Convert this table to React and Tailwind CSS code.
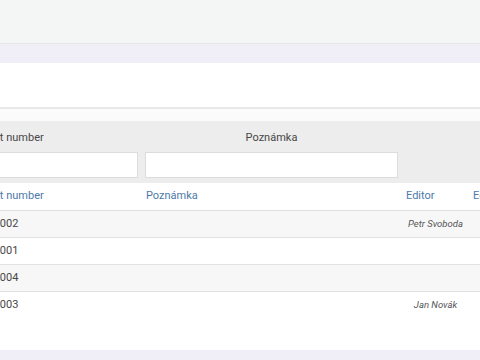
import React from "react";

const rows = [
  { number: "2024-002", note: "", editor: "Petr Svoboda" },
  { number: "2024-001", note: "", editor: "" },
  { number: "2024-004", note: "", editor: "" },
  { number: "2024-003", note: "", editor: "Jan Novák" },
];

const cols = "grid grid-cols-[197px_259px_69px_120px]";

export default function App() {
  return (
    <div
      className="w-[480px] h-[360px] overflow-hidden bg-white text-[11px] text-[#474747] flex flex-col"
      style={{ fontFamily: "Roboto, 'Liberation Sans', sans-serif" }}
    >
      {/* top toolbar */}
      <div className="h-[44px] shrink-0 bg-[#f4f6f5] border-b border-[#e6e8e8]" />
      <div className="h-[19px] shrink-0 bg-[#f0eff8]" />

      {/* page header area */}
      <div className="h-[46px] shrink-0 bg-white border-b-2 border-[#e8e8e8]" />
      <div className="h-[12px] shrink-0 bg-[#fbfbfb]" />

      <div className="-ml-[55px] shrink-0">
        {/* filter row */}
        <div className={`${cols} bg-[#ededed] h-[62px] pt-[10px]`}>
          <div className="pl-[8px] pr-[4px]">
            <div className="h-[14px] leading-[14px] whitespace-nowrap">Document number</div>
            <input className="mt-[7px] w-full h-[26px] bg-white border border-[#dcdcdc] outline-none" />
          </div>
          <div className="px-[3px]">
            <div className="h-[14px] leading-[14px] text-center">Poznámka</div>
            <input className="mt-[7px] w-full h-[26px] bg-white border border-[#dcdcdc] outline-none" />
          </div>
          <div />
          <div />
        </div>

        {/* column headers */}
        <div className={`${cols} h-[28px] items-center border-b border-[#dedede] text-[#4d7aa8]`}>
          <div className="pl-[8px] whitespace-nowrap">Document number</div>
          <div className="pl-[4px]">Poznámka</div>
          <div className="pl-[5px]">Editor</div>
          <div className="pl-[3px]">Editováno</div>
        </div>

        {/* data rows */}
        {rows.map((row, i) => (
          <div
            key={row.number}
            className={`${cols} h-[27px] items-center ${
              i < rows.length - 1 ? "border-b border-[#e2e2e2]" : ""
            } ${i % 2 === 0 ? "bg-[#f7f7f7]" : "bg-white"}`}
          >
            <div className="pl-[27px] whitespace-nowrap">{row.number}</div>
            <div className="pl-[4px]">{row.note}</div>
            <div className="text-center italic text-[9.5px] text-[#555] whitespace-nowrap">
              {row.editor}
            </div>
            <div />
          </div>
        ))}
      </div>

      <div className="flex-1 bg-white" />
      <div className="h-[10px] shrink-0 bg-[#f0eff8]" />
    </div>
  );
}
